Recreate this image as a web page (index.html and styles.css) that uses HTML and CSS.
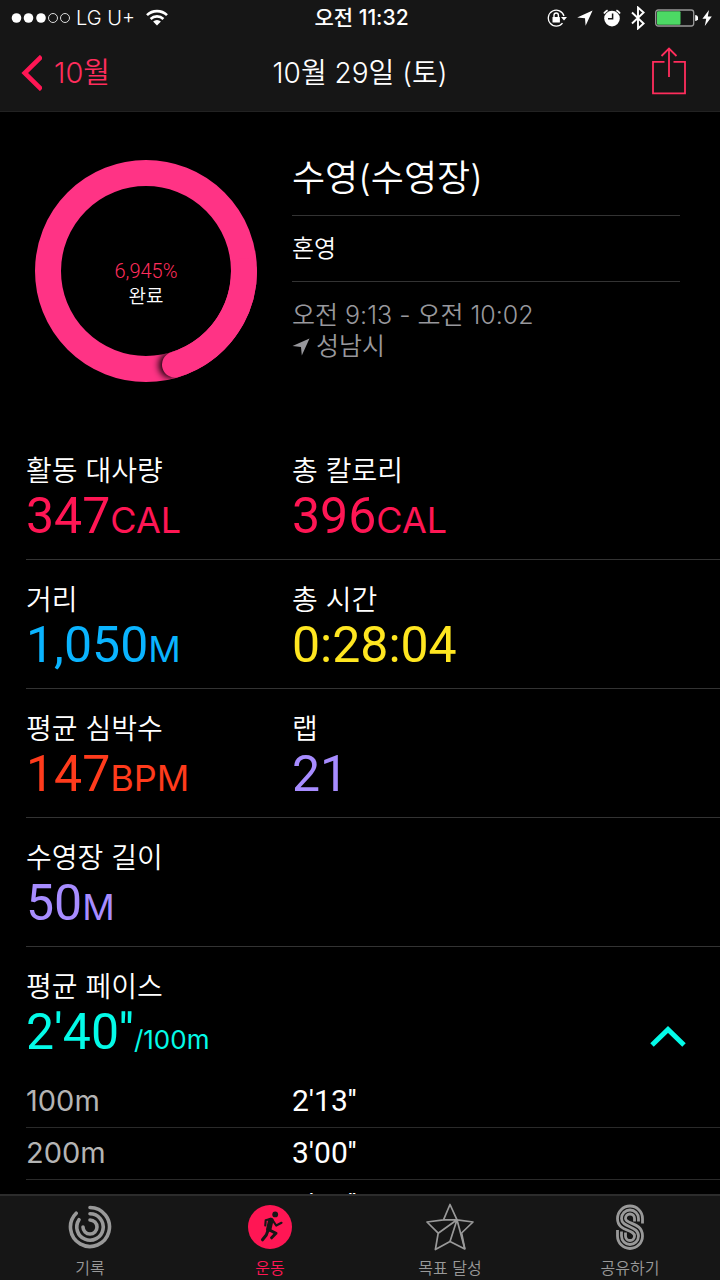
FILE: index.html
```html
<!DOCTYPE html>
<html lang="ko">
<head>
<meta charset="utf-8">
<meta name="viewport" content="width=device-width, initial-scale=1">
<title>10월 29일 (토)</title>
<link rel="stylesheet" href="styles.css">
</head>
<body>
<div class="app">
  <header class="top">
    <div class="status">
      <div class="status-left">
        <svg class="signal" width="60" height="12" viewBox="0 0 60 12" aria-hidden="true">
          <g fill="#fff"><circle cx="5.5" cy="6" r="4.8"/><circle cx="17.5" cy="6" r="4.8"/><circle cx="30" cy="6" r="4.8"/></g>
          <g fill="none" stroke="#ddd" stroke-width="1"><circle cx="42" cy="6" r="4.5"/><circle cx="54" cy="6" r="4.5"/></g>
        </svg>
        <span class="carrier">LG U+</span>
        <svg width="22" height="18" viewBox="0 0 22 18" aria-hidden="true">
          <g fill="none" stroke="#fff" stroke-width="2.6"><path d="M1 6.2a14.2 14.2 0 0 1 20 0"/><path d="M4.6 10a9 9 0 0 1 12.8 0"/></g>
          <path d="M11 16.5l-3.9-3.9a5.5 5.5 0 0 1 7.8 0z" fill="#fff"/>
        </svg>
      </div>
      <span class="clock">오전 11:32</span>
      <div class="status-right">
        <svg width="20" height="18" viewBox="0 0 20 18" aria-hidden="true">
          <path d="M15.500 14.200A8 8 0 1 1 17 7" fill="none" stroke="#fff" stroke-width="1.300"/>
          <path d="M14 8h6l-3 3.600z" fill="#fff"/>
          <rect x="5.500" y="8" width="7.400" height="5.600" rx=".6" fill="#fff"/>
          <path d="M7 8.500V6.200a2.200 2.200 0 0 1 4.400 0v2.300" fill="none" stroke="#fff" stroke-width="1.400"/>
        </svg>
        <svg width="16" height="16" viewBox="0 0 16 16" aria-hidden="true"><path d="M15.600.4L8.600 15.800 8 8.200.2 7.400z" fill="#fff"/></svg>
        <svg width="18" height="18" viewBox="0 0 18 18" aria-hidden="true">
          <circle cx="9" cy="9.600" r="7.800" fill="#fff"/>
          <path d="M1 4.600A11 11 0 0 1 4.600 1.200M17 4.600a11 11 0 0 0-3.600-3.400" stroke="#fff" stroke-width="1.800" fill="none"/>
          <path d="M9.600 4.600v5.200H5" fill="none" stroke="#161616" stroke-width="1.500"/>
        </svg>
        <svg width="14" height="24" viewBox="0 0 14 24" aria-hidden="true"><path d="M1 6.500l11.600 11L7 22.500v-21l5.600 5L1 17.500" fill="none" stroke="#fff" stroke-width="1.900"/></svg>
        <svg class="battery" width="43" height="18" viewBox="0 0 43 18" aria-hidden="true">
          <rect x=".7" y="1" width="38" height="16" rx="2.500" fill="none" stroke="#999" stroke-width="1.300"/>
          <rect x="2" y="2.300" width="23.500" height="13.400" rx="1" fill="#4cd964"/>
          <path d="M40.200 6v6a3 3 0 0 0 0-6z" fill="#fff"/>
        </svg>
        <svg width="10" height="16" viewBox="0 0 10 16" aria-hidden="true"><path d="M7 0L.4 8.800h3.800L2.800 16 9.800 6.400H5.800z" fill="#fff"/></svg>
      </div>
    </div>
    <nav class="nav">
      <a class="back" href="#">
        <svg width="22" height="36" viewBox="0 0 22 36" aria-hidden="true"><path d="M21.500 1.500L4.700 18 21.500 34.500" fill="none" stroke="#ff1654" stroke-width="4.600"/></svg>
        10월
      </a>
      <h1 class="nav-title">10월 29일 (토)</h1>
      <button class="share" type="button" aria-label="공유">
        <svg width="34" height="48" viewBox="0 0 34 48" aria-hidden="true">
          <path d="M12.500 14.800H1V46.400H33V14.800H21.500M17 1V30M9.500 9L17 1.500 24.500 9" fill="none" stroke="#ff2d5c" stroke-width="1.800"/>
        </svg>
      </button>
    </nav>
  </header>

  <main class="content">
    <section class="hero">
      <div class="ring">
        <svg class="ring-art" viewBox="0 0 222 222" aria-hidden="true">
          <defs>
            <filter id="soft" x="-50%" y="-50%" width="200%" height="200%"><feGaussianBlur stdDeviation="3.500"/></filter>
            <clipPath id="band"><path clip-rule="evenodd" d="M0 111a111 111 0 1 0 222 0a111 111 0 1 0-222 0zM26 111a85 85 0 1 0 170 0a85 85 0 1 0-170 0z"/></clipPath>
          </defs>
          <circle cx="111" cy="111" r="98" fill="none" stroke="#ff3385" stroke-width="26"/>
          <g clip-path="url(#band)"><circle cx="137" cy="205" r="13" fill="#000" filter="url(#soft)"/></g>
          <path d="M209 111A98 98 0 0 1 140 204.600" fill="none" stroke="#ff3385" stroke-width="26" stroke-linecap="round"/>
        </svg>
        <div class="ring-text">
          <span class="ring-percent">6,945%</span>
          <span class="ring-done">완료</span>
        </div>
      </div>
      <div class="summary">
        <h2 class="summary-title">수영(수영장)</h2>
        <p class="summary-kind">혼영</p>
        <div class="summary-meta">
          <p>오전 9:13 - 오전 10:02</p>
          <p class="place"><svg width="18" height="18" viewBox="0 0 18 18" aria-hidden="true"><path d="M17.500.5L9.800 17.500 9 9 .5 8z" fill="#98989d"/></svg>성남시</p>
        </div>
      </div>
    </section>

    <dl class="stats">
      <div class="row">
        <div><dt>활동 대사량</dt><dd class="red">347<span class="unit">CAL</span></dd></div>
        <div><dt>총 칼로리</dt><dd class="red">396<span class="unit">CAL</span></dd></div>
      </div>
      <div class="row">
        <div><dt>거리</dt><dd class="blue">1,050<span class="unit">M</span></dd></div>
        <div><dt>총 시간</dt><dd class="yellow">0:28:04</dd></div>
      </div>
      <div class="row">
        <div><dt>평균 심박수</dt><dd class="orange">147<span class="unit">BPM</span></dd></div>
        <div><dt>랩</dt><dd class="violet">21</dd></div>
      </div>
      <div class="row">
        <div><dt>수영장 길이</dt><dd class="violet">50<span class="unit">M</span></dd></div>
      </div>
      <div class="row pace">
        <div><dt>평균 페이스</dt><dd class="cyan">2'40''<span class="per">/100m</span></dd></div>
        <button class="toggle" type="button" aria-label="접기">
          <svg width="36" height="22" viewBox="0 0 36 22" aria-hidden="true"><path d="M2 20L18 4.500 34 20" fill="none" stroke="#04fbe8" stroke-width="5"/></svg>
        </button>
      </div>
    </dl>

    <table class="splits">
      <tbody>
        <tr><th scope="row">100m</th><td>2'13''</td></tr>
        <tr><th scope="row">200m</th><td>3'00''</td></tr>
        <tr><th scope="row">300m</th><td>2'42''</td></tr>
      </tbody>
    </table>
  </main>

  <nav class="tabs">
    <a class="tab" href="#">
      <svg width="44" height="44" viewBox="0 0 44 44" aria-hidden="true">
        <g fill="none" stroke="#999" stroke-width="3.600" stroke-linecap="round">
          <path d="M22 2.500A19.500 19.500 0 1 1 8.200 8.200"/>
          <path d="M22 8.800A13.200 13.200 0 1 1 11 14.700"/>
          <path d="M22 15A7 7 0 1 1 15 22"/>
        </g>
      </svg>
      기록
    </a>
    <a class="tab tab-active" href="#" aria-current="page">
      <svg width="44" height="44" viewBox="0 0 44 44" aria-hidden="true">
        <circle cx="22" cy="22" r="22" fill="#ff1654"/>
        <circle cx="27.200" cy="9.400" r="2.900" fill="#161616"/>
        <g fill="none" stroke="#161616" stroke-linecap="round" stroke-linejoin="round">
          <path d="M22.800 15.500L20.800 24" stroke-width="5.400"/>
          <path d="M22 14L17.700 15.300 17.300 20.500M24.500 15L28.200 20.500 33.500 17.800" stroke-width="2.200"/>
          <path d="M21.500 25L28 28.300 23.600 32.800" stroke-width="3"/>
          <path d="M19.800 26L18.300 30 14.500 34.800" stroke-width="3"/>
        </g>
      </svg>
      운동
    </a>
    <a class="tab" href="#">
      <svg width="48" height="48" viewBox="0 0 48 48" aria-hidden="true">
        <g fill="none" stroke="#999" stroke-width="1.700" stroke-linejoin="round">
          <path d="M24 1.500L31 16.800 47 19 35.600 30 38.800 46 24 38.500 9.400 46.500 12.200 30.200 1 19 17.500 16.800z"/>
          <path d="M17.500 16.800H31L12.200 30.200M31 16.800L24 38.500M31 16.800L38.800 46"/>
        </g>
      </svg>
      목표 달성
    </a>
    <a class="tab" href="#">
      <svg width="30" height="46" viewBox="0 0 30 46" aria-hidden="true">
        <g fill="none" stroke="#999" stroke-width="2.800">
          <path d="M27.500 19.500V14.500a12.500 12.500 0 0 0-25 0C2.500 28 19.500 25 19.500 32a4.500 4.500 0 0 1-9 0V28.500"/>
          <path d="M23.500 17.500V14.500a8.500 8.500 0 0 0-17 0C6.500 24 23.500 21.500 23.500 32a8.500 8.500 0 0 1-17 0V27.500"/>
          <path d="M19.500 17.500V14.500a4.500 4.500 0 0 0-9 0C10.500 20.500 27.500 18 27.500 32a12.500 12.500 0 0 1-25 0V26"/>
        </g>
      </svg>
      공유하기
    </a>
  </nav>
</div>
</body>
</html>
```
FILE: styles.css
```css
* { box-sizing: border-box; }

body {
  margin: 0;
  background: #000;
  color: #fff;
  font-family: "Inter", "Noto Sans CJK KR", sans-serif;
  font-weight: 350;
}

h1, h2, p, dl, dd { margin: 0; font-weight: inherit; }
a { color: inherit; text-decoration: none; }
button { padding: 0; border: 0; background: none; cursor: pointer; }
svg { display: block; flex: none; }

.app {
  display: flex;
  flex-direction: column;
  height: 100vh;
}

/* Header */
.top {
  flex: none;
  background: #161616;
  border-bottom: 1px solid #222;
}
.status {
  display: grid;
  grid-template-columns: 1fr auto 1fr;
  align-items: center;
  height: 35px;
  padding: 0 8px 0 11px;
  font-size: 20px;
  line-height: 24px;
}
.status-left, .status-right { display: flex; align-items: center; }
.status-left { gap: 5px; }
.carrier { margin-right: 6px; }
.clock { font-size: 21px; font-weight: 500; }
.status-right { justify-content: flex-end; gap: 10px; }
.battery { margin-right: -6px; }

.nav {
  display: grid;
  grid-template-columns: 1fr auto 1fr;
  align-items: center;
  height: 76px;
  padding: 0 20px;
  font-size: 29px;
  line-height: 40px;
}
.back {
  display: flex;
  align-items: center;
  gap: 12px;
  color: #ff2d5c;
}
.nav-title { font-size: 28px; }
.share { justify-self: end; margin: 0 14px 4px 0; }

/* Summary */
.content { flex: 1; min-height: 0; overflow: hidden; }
.hero {
  display: flex;
  gap: 35px;
  min-height: 319px;
  padding: 31px 40px 0 35px;
}
.ring {
  display: grid;
  flex: none;
  width: 222px;
  height: 222px;
  margin-top: 17px;
}
.ring > * { grid-area: 1 / 1; }
.ring-text {
  display: flex;
  flex-direction: column;
  align-items: center;
  align-self: center;
  padding-top: 26px;
  font-size: 19px;
  line-height: 26px;
}
.ring-percent {
  color: #ff2d5c;
  font-family: "Roboto", sans-serif;
  font-size: 20px;
}
.summary { flex: 1; }
.summary-title {
  padding: 9px 0 11px;
  border-bottom: 1px solid #333;
  font-size: 36px;
  line-height: 52px;
}
.summary-kind {
  padding: 17px 0 16px;
  border-bottom: 1px solid #333;
  font-size: 24px;
  line-height: 32px;
}
.summary-meta {
  padding-top: 18px;
  color: #98989d;
  font-size: 25px;
  line-height: 31px;
}
.place { display: flex; align-items: center; gap: 6px; }

/* Stats */
.row {
  display: grid;
  grid-template-columns: 266px 1fr;
  margin-left: 26px;
  padding: 24px 0 14px;
  border-bottom: 1px solid #333;
}
.pace { grid-template-columns: 1fr auto; border-bottom: 0; }
dt { font-size: 28px; line-height: 32px; }
dd {
  font-family: "Roboto", sans-serif;
  font-size: 50px;
  font-weight: 400;
  line-height: 58px;
}
.unit, .per { font-family: "Inter", sans-serif; line-height: 1; }
.unit { font-size: 36px; }
.per { font-size: 26px; }
.red { color: #ff1654; }
.blue { color: #0ab4ff; }
.yellow { color: #ffe620; }
.orange { color: #ff3b1c; }
.violet { color: #a78cff; }
.cyan { color: #04fbe8; }
.toggle { align-self: end; margin: 0 34px 14px 0; }

/* Splits */
.splits {
  width: calc(100% - 26px);
  margin-left: 26px;
  border-collapse: collapse;
  font-size: 29px;
  line-height: 50px;
}
.splits th, .splits td {
  height: 52px;
  padding: 0;
  border-bottom: 1px solid #2a2a2a;
  font-weight: 400;
  text-align: left;
}
.splits th { width: 266px; color: #b4b4b4; }
.splits td { font-family: "Roboto", sans-serif; font-size: 30px; }

/* Tab bar */
.tabs {
  display: grid;
  grid-template-columns: repeat(4, 1fr);
  flex: none;
  height: 86px;
  background: #161616;
  border-top: 2px solid #2c2c2c;
}
.tab {
  display: grid;
  grid-template-rows: 62px 20px;
  place-items: center;
  color: #999;
  font-size: 16px;
  line-height: 20px;
}
.tab-active { color: #ff1654; }
```
